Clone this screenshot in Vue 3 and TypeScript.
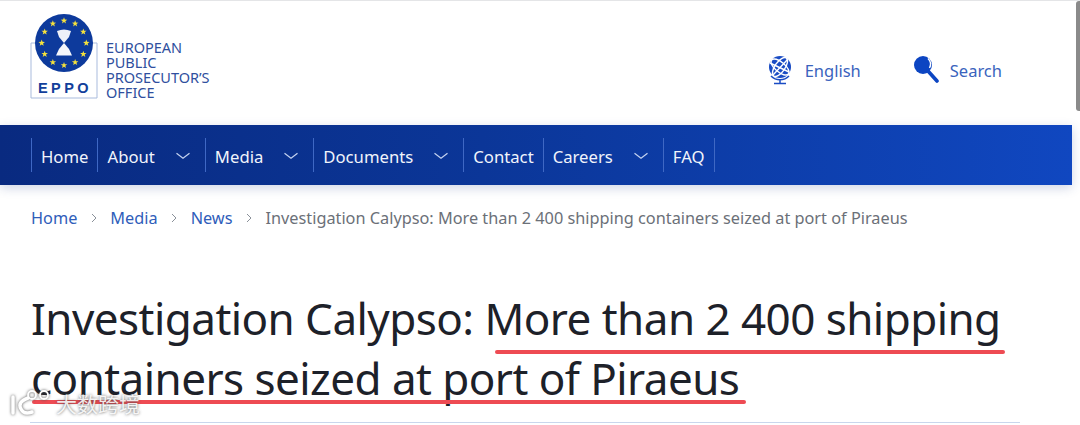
<script setup lang="ts">
const nav = [
  { label: 'Home', caret: false },
  { label: 'About', caret: true },
  { label: 'Media', caret: true },
  { label: 'Documents', caret: true },
  { label: 'Contact', caret: false },
  { label: 'Careers', caret: true },
  { label: 'FAQ', caret: false },
]
const crumbs = ['Home', 'Media', 'News']
const stars = Array.from({ length: 12 }, (_, i) => {
  const a = (i * 30 * Math.PI) / 180
  return { x: 64 + 22.3 * Math.sin(a), y: 43 - 22.3 * Math.cos(a) }
})
const starPts = Array.from({ length: 10 }, (_, i) => {
  const r = i % 2 ? 1.4 : 3.4
  const a = (i * 36 * Math.PI) / 180
  return `${(r * Math.sin(a)).toFixed(2)},${(-r * Math.cos(a)).toFixed(2)}`
}).join(' ')
</script>

<template>
  <div class="page">
    <div class="content">
      <header class="top">
        <div class="brand">
          <svg class="logo" width="68" height="86" viewBox="30 14 68 86">
            <path d="M36 43H31v55h66V43H92" fill="none" stroke="#a9bbdd" stroke-width="1" />
            <circle cx="64" cy="43" r="29" fill="#0d3a9c" />
            <polygon v-for="(s, i) in stars" :key="i" :points="starPts" fill="#f5e23c" :transform="`translate(${s.x} ${s.y})`" />
            <path d="M57 31Q64 28 71 31L69 37L64 43L59 37Z" fill="#eef1f8" />
            <path d="M64 43L69 49L72 55.500H56L59 49Z" fill="#f4f6fb" />
            <text x="65" y="93" class="eppo" text-anchor="middle">EPPO</text>
          </svg>
          <div class="brand-name">EUROPEAN<br />PUBLIC<br />PROSECUTOR’S<br />OFFICE</div>
        </div>
        <div class="tools">
          <a class="tool lang">
            <svg width="26" height="30" viewBox="0 0 26 30">
              <circle cx="13" cy="12" r="11" fill="#1a4cc4" />
              <g fill="none" stroke="#fff" stroke-width="1.400">
                <ellipse cx="13" cy="12" rx="5" ry="11" transform="rotate(35 13 12)" />
                <ellipse cx="13" cy="12" rx="5" ry="11" transform="rotate(-50 13 12)" />
                <path d="M3 8l19 9M6 20L21 4" />
              </g>
              <path d="M4 21a12.500 12.500 0 0 0 18 0M13 24v4M7 28.500h12" fill="none" stroke="#1a4cc4" stroke-width="1.500" />
            </svg>
            <span>English</span>
          </a>
          <a class="tool search">
            <svg width="26" height="30" viewBox="0 0 26 30">
              <circle cx="10" cy="10" r="9" fill="#0c45c2" />
              <path d="M15 3.500a8 8 0 0 1 1.500 9.500" fill="none" stroke="#fff" stroke-width="1.400" />
              <path d="M15 16L24 26" stroke="#0c45c2" stroke-width="3.600" stroke-linecap="round" />
            </svg>
            <span>Search</span>
          </a>
        </div>
      </header>

      <nav class="nav">
        <div class="nav-items">
          <a v-for="item in nav" :key="item.label" class="nav-item">
            <span>{{ item.label }}</span>
            <svg v-if="item.caret" class="caret" width="16" height="8" viewBox="0 0 16 8">
              <path d="M1.500 1.200L8 6.200l6.500-5" fill="none" stroke="#c5d3f0" stroke-width="1.200" />
            </svg>
          </a>
        </div>
      </nav>

      <div class="crumbs">
        <template v-for="c in crumbs" :key="c">
          <a class="crumb">{{ c }}</a>
          <svg class="sep" width="6" height="10" viewBox="0 0 6 10">
            <path d="M1 1l4 4-4 4" fill="none" stroke="#8a9099" stroke-width="1" />
          </svg>
        </template>
        <span class="current">Investigation Calypso: More than 2 400 shipping containers seized at port of Piraeus</span>
      </div>

      <h1 class="title">Investigation Calypso: More than 2 400 shipping containers seized at port of Piraeus</h1>
      <div class="rule"></div>
    </div>

    <div class="scrollbar"></div>
    <div class="mark mark-1"></div>
    <div class="mark mark-2"></div>
    <div class="watermark">
      <svg class="wm-logo" width="44" height="30" viewBox="0 0 44 30">
        <g fill="none" stroke="#fff" stroke-linecap="round">
          <path d="M5 9v16" stroke-width="3.500" />
          <path d="M20 10Q9 14 13 21Q16 27 24 24" stroke-width="3.500" />
          <circle cx="24" cy="7" r="4" stroke-width="1.800" />
          <circle cx="36" cy="7" r="4" stroke-width="1.800" />
        </g>
      </svg>
      <span>大数跨境</span>
    </div>
  </div>
</template>

<style>
html, body { margin: 0; padding: 0; background: #fff; overflow: hidden; }
</style>

<style scoped>
.page {
  position: relative;
  width: 1080px;
  height: 425px;
  overflow: hidden;
  background: #fff;
  border-top: 1px solid #e4e5e7;
  box-sizing: border-box;
  font-family: "Noto Sans", "Open Sans", sans-serif;
}
.content { width: 1072px; }
.top {
  height: 124px;
  display: flex;
  justify-content: space-between;
  box-sizing: border-box;
  padding: 13px 70px 0 30px;
}
.brand { display: flex; align-items: flex-start; }
.logo { display: block; }
.eppo { font: 700 14.5px "Liberation Sans", sans-serif; letter-spacing: 3.4px; fill: #123f9b; }
.brand-name {
  margin: 26px 0 0 8px;
  font-size: 14.5px;
  line-height: 15px;
  color: #2f4f9e;
  white-space: nowrap;
}
.tools { display: flex; gap: 52px; padding-top: 41px; }
.tool {
  display: flex;
  align-items: flex-start;
  gap: 11px;
  font-size: 16.5px;
  line-height: 32px;
  color: #3a63bd;
}
.lang { gap: 12px; }
.nav {
  height: 60px;
  background: linear-gradient(90deg, #092a80 0%, #0b3698 45%, #1047c0 100%);
  box-shadow: 0 3px 10px rgba(40, 70, 140, 0.22);
  display: flex;
  align-items: center;
  padding-left: 31px;
}
.nav-items { display: flex; border-right: 1px solid #3f68c4; }
.nav-item {
  display: flex;
  align-items: center;
  height: 32px;
  padding: 2px 9px 0;
  border-left: 1px solid #3f68c4;
  color: #f1f4fb;
  font-size: 16.7px;
}
.caret { margin: 0 5px 0 20px; }
.crumbs {
  display: flex;
  align-items: center;
  height: 24px;
  margin: 21px 0 0 31px;
  font-size: 16.3px;
  white-space: nowrap;
}
.crumb { color: #2f5dba; }
.sep { margin: 0 13.5px; }
.current { color: #6b7078; }
.title {
  width: 1000px;
  margin: 58px 0 0 31px;
  font-size: 44px;
  font-weight: 400;
  line-height: 60px;
  letter-spacing: -0.55px;
  color: #1d2129;
}
.rule {
  width: 990px;
  height: 1px;
  margin: 14px 0 0 30px;
  background: #c9d6ec;
}
.scrollbar {
  position: absolute;
  top: 0;
  right: 0;
  width: 4px;
  height: 110px;
  background: #8a8a8a;
  border-radius: 3px 0 0 3px;
}
.mark {
  position: absolute;
  height: 4px;
  background: #ee4b53;
  border-radius: 2px;
}
.mark-1 { left: 495px; top: 349px; width: 510px; }
.mark-2 { left: 32px; top: 399px; width: 714px; }
.watermark {
  position: absolute;
  left: 8px;
  top: 387px;
  display: flex;
  align-items: center;
  gap: 4px;
  color: rgba(255, 255, 255, 0.88);
  font-family: "Noto Sans CJK SC", sans-serif;
  font-size: 21px;
  line-height: 30px;
  text-shadow: 0 0 3px rgba(70, 70, 70, 0.9);
}
.wm-logo { filter: drop-shadow(0 0 1.5px rgba(70, 70, 70, 0.9)); }
</style>
